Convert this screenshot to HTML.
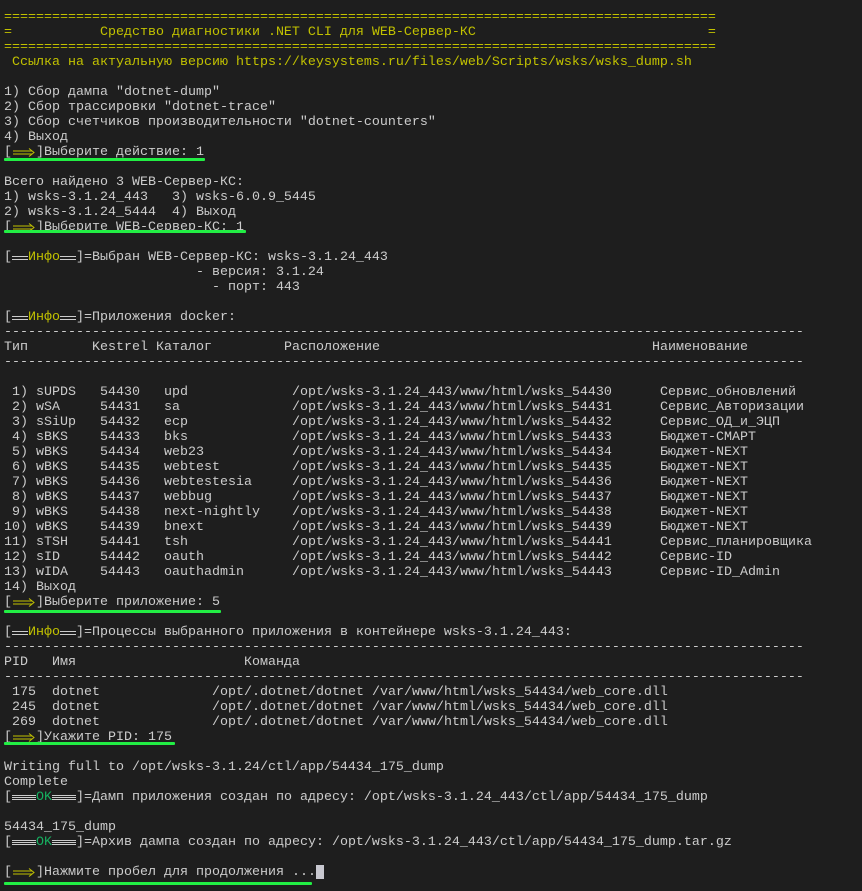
<!DOCTYPE html>
<html><head><meta charset="utf-8">
<style>
html,body{margin:0;padding:0;background:#1e1e1e;}
body{width:862px;height:891px;overflow:hidden;position:relative;}
#t{position:absolute;left:4px;top:10px;font-family:"Liberation Mono","DejaVu Sans Mono",monospace;font-size:13.33px;line-height:15px;color:#cccccc;white-space:normal;}
#t div{height:15px;white-space:pre;}
.y{color:#c1c100;}
.g{color:#16b060;}
.c{display:inline-block;overflow:visible;white-space:pre;vertical-align:top;}
.arr{display:inline-block;width:24px;height:15px;vertical-align:top;}
.b2{display:inline-block;width:16px;border-top:1px solid #ccc;border-bottom:1px solid #ccc;vertical-align:top;margin-top:6px;box-sizing:border-box;height:4px;}
.b3{display:inline-block;width:24px;height:5px;vertical-align:top;margin-top:5px;background:linear-gradient(#ccc 0 1px,transparent 1px 2px,#ccc 2px 3px,transparent 3px 4px,#ccc 4px 5px);}
.ul{position:absolute;left:4px;height:3px;background:#22ee44;border-radius:1px;}
.cur{display:inline-block;width:8px;height:14px;background:#c8c8d0;vertical-align:top;}
</style></head><body>
<div id="t"><div class="y">=========================================================================================</div><div class="y">=           Средство диагностики .NET CLI для WEB-Сервер-КС                             =</div><div class="y">=========================================================================================</div><div class="y"> Ссылка на актуальную версию https://keysystems.ru/files/web/Scripts/wsks/wsks_dump.sh</div><div> </div><div>1) Сбор дампа "dotnet-dump"</div><div>2) Сбор трассировки "dotnet-trace"</div><div>3) Сбор счетчиков производительности "dotnet-counters"</div><div>4) Выход</div><div>[<svg class="arr" viewBox="0 0 24 15"><path d="M1 6H20M1 9H20M17 3.5L22 7.5L17 11.5" fill="none" stroke="#c1c100" stroke-width="1"/></svg>]Выберите действие: 1</div><div> </div><div>Всего найдено 3 WEB-Сервер-КС:</div><div>1) wsks-3.1.24_443   3) wsks-6.0.9_5445</div><div>2) wsks-3.1.24_5444  4) Выход</div><div>[<svg class="arr" viewBox="0 0 24 15"><path d="M1 6H20M1 9H20M17 3.5L22 7.5L17 11.5" fill="none" stroke="#c1c100" stroke-width="1"/></svg>]Выберите WEB-Сервер-КС: 1</div><div> </div><div>[<span class="b2"></span><span class="y">Инфо</span><span class="b2"></span>]=Выбран WEB-Сервер-КС: wsks-3.1.24_443</div><div>                        - версия: 3.1.24</div><div>                          - порт: 443</div><div> </div><div>[<span class="b2"></span><span class="y">Инфо</span><span class="b2"></span>]=Приложения docker:</div><div>----------------------------------------------------------------------------------------------------</div><div><span class="c" style="width:88px">Тип</span><span class="c" style="width:64px">Kestrel</span><span class="c" style="width:128px">Каталог</span><span class="c" style="width:368px">Расположение</span>Наименование</div><div>----------------------------------------------------------------------------------------------------</div><div> </div><div><span class="c" style="width:32px"> 1)</span><span class="c" style="width:64px">sUPDS</span><span class="c" style="width:64px">54430</span><span class="c" style="width:128px">upd</span><span class="c" style="width:368px">/opt/wsks-3.1.24_443/www/html/wsks_54430</span>Сервис_обновлений</div><div><span class="c" style="width:32px"> 2)</span><span class="c" style="width:64px">wSA</span><span class="c" style="width:64px">54431</span><span class="c" style="width:128px">sa</span><span class="c" style="width:368px">/opt/wsks-3.1.24_443/www/html/wsks_54431</span>Сервис_Авторизации</div><div><span class="c" style="width:32px"> 3)</span><span class="c" style="width:64px">sSiUp</span><span class="c" style="width:64px">54432</span><span class="c" style="width:128px">ecp</span><span class="c" style="width:368px">/opt/wsks-3.1.24_443/www/html/wsks_54432</span>Сервис_ОД_и_ЭЦП</div><div><span class="c" style="width:32px"> 4)</span><span class="c" style="width:64px">sBKS</span><span class="c" style="width:64px">54433</span><span class="c" style="width:128px">bks</span><span class="c" style="width:368px">/opt/wsks-3.1.24_443/www/html/wsks_54433</span>Бюджет-СМАРТ</div><div><span class="c" style="width:32px"> 5)</span><span class="c" style="width:64px">wBKS</span><span class="c" style="width:64px">54434</span><span class="c" style="width:128px">web23</span><span class="c" style="width:368px">/opt/wsks-3.1.24_443/www/html/wsks_54434</span>Бюджет-NEXT</div><div><span class="c" style="width:32px"> 6)</span><span class="c" style="width:64px">wBKS</span><span class="c" style="width:64px">54435</span><span class="c" style="width:128px">webtest</span><span class="c" style="width:368px">/opt/wsks-3.1.24_443/www/html/wsks_54435</span>Бюджет-NEXT</div><div><span class="c" style="width:32px"> 7)</span><span class="c" style="width:64px">wBKS</span><span class="c" style="width:64px">54436</span><span class="c" style="width:128px">webtestesia</span><span class="c" style="width:368px">/opt/wsks-3.1.24_443/www/html/wsks_54436</span>Бюджет-NEXT</div><div><span class="c" style="width:32px"> 8)</span><span class="c" style="width:64px">wBKS</span><span class="c" style="width:64px">54437</span><span class="c" style="width:128px">webbug</span><span class="c" style="width:368px">/opt/wsks-3.1.24_443/www/html/wsks_54437</span>Бюджет-NEXT</div><div><span class="c" style="width:32px"> 9)</span><span class="c" style="width:64px">wBKS</span><span class="c" style="width:64px">54438</span><span class="c" style="width:128px">next-nightly</span><span class="c" style="width:368px">/opt/wsks-3.1.24_443/www/html/wsks_54438</span>Бюджет-NEXT</div><div><span class="c" style="width:32px">10)</span><span class="c" style="width:64px">wBKS</span><span class="c" style="width:64px">54439</span><span class="c" style="width:128px">bnext</span><span class="c" style="width:368px">/opt/wsks-3.1.24_443/www/html/wsks_54439</span>Бюджет-NEXT</div><div><span class="c" style="width:32px">11)</span><span class="c" style="width:64px">sTSH</span><span class="c" style="width:64px">54441</span><span class="c" style="width:128px">tsh</span><span class="c" style="width:368px">/opt/wsks-3.1.24_443/www/html/wsks_54441</span>Сервис_планировщика</div><div><span class="c" style="width:32px">12)</span><span class="c" style="width:64px">sID</span><span class="c" style="width:64px">54442</span><span class="c" style="width:128px">oauth</span><span class="c" style="width:368px">/opt/wsks-3.1.24_443/www/html/wsks_54442</span>Сервис-ID</div><div><span class="c" style="width:32px">13)</span><span class="c" style="width:64px">wIDA</span><span class="c" style="width:64px">54443</span><span class="c" style="width:128px">oauthadmin</span><span class="c" style="width:368px">/opt/wsks-3.1.24_443/www/html/wsks_54443</span>Сервис-ID_Admin</div><div>14) Выход</div><div>[<svg class="arr" viewBox="0 0 24 15"><path d="M1 6H20M1 9H20M17 3.5L22 7.5L17 11.5" fill="none" stroke="#c1c100" stroke-width="1"/></svg>]Выберите приложение: 5</div><div> </div><div>[<span class="b2"></span><span class="y">Инфо</span><span class="b2"></span>]=Процессы выбранного приложения в контейнере wsks-3.1.24_443:</div><div>----------------------------------------------------------------------------------------------------</div><div><span class="c" style="width:48px">PID</span><span class="c" style="width:192px">Имя</span>Команда</div><div>----------------------------------------------------------------------------------------------------</div><div><span class="c" style="width:48px"> 175</span><span class="c" style="width:160px">dotnet</span>/opt/.dotnet/dotnet /var/www/html/wsks_54434/web_core.dll</div><div><span class="c" style="width:48px"> 245</span><span class="c" style="width:160px">dotnet</span>/opt/.dotnet/dotnet /var/www/html/wsks_54434/web_core.dll</div><div><span class="c" style="width:48px"> 269</span><span class="c" style="width:160px">dotnet</span>/opt/.dotnet/dotnet /var/www/html/wsks_54434/web_core.dll</div><div>[<svg class="arr" viewBox="0 0 24 15"><path d="M1 6H20M1 9H20M17 3.5L22 7.5L17 11.5" fill="none" stroke="#c1c100" stroke-width="1"/></svg>]Укажите PID: 175</div><div> </div><div>Writing full to /opt/wsks-3.1.24/ctl/app/54434_175_dump</div><div>Complete</div><div>[<span class="b3"></span><span class="g">OK</span><span class="b3"></span>]=Дамп приложения создан по адресу: /opt/wsks-3.1.24_443/ctl/app/54434_175_dump</div><div> </div><div>54434_175_dump</div><div>[<span class="b3"></span><span class="g">OK</span><span class="b3"></span>]=Архив дампа создан по адресу: /opt/wsks-3.1.24_443/ctl/app/54434_175_dump.tar.gz</div><div> </div><div>[<svg class="arr" viewBox="0 0 24 15"><path d="M1 6H20M1 9H20M17 3.5L22 7.5L17 11.5" fill="none" stroke="#c1c100" stroke-width="1"/></svg>]Нажмите пробел для продолжения ...<span class="cur"></span></div></div>
<div class="ul" style="top:158px;width:201px"></div>
<div class="ul" style="top:230px;width:242px"></div>
<div class="ul" style="top:610px;width:217px"></div>
<div class="ul" style="top:742px;width:171px"></div>
<div class="ul" style="top:882px;width:308px"></div>
</body></html>
